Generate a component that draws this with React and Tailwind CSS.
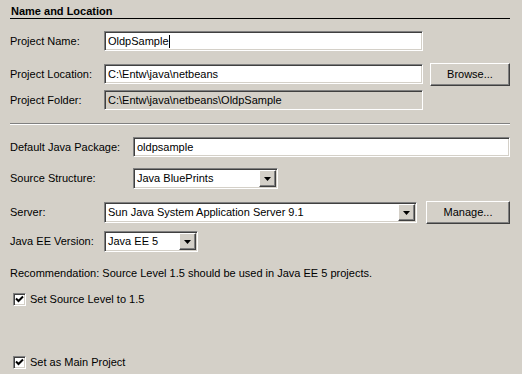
import React from "react";

const sunken =
  "border border-t-[#808080] border-l-[#808080] border-r-white border-b-white shadow-[inset_1px_1px_0_#404040,inset_-1px_-1px_0_#d4d0c8]";
const raised =
  "border border-t-white border-l-white border-r-[#404040] border-b-[#404040] shadow-[inset_-1px_-1px_0_#808080] bg-[#d4d0c8]";

function Field({ className = "", children, disabled }) {
  return (
    <div
      className={`${sunken} ${disabled ? "bg-[#d4d0c8]" : "bg-white"} h-[20px] flex items-center pl-[3px] whitespace-nowrap overflow-hidden ${className}`}
    >
      {children}
    </div>
  );
}

function Button({ className = "", children }) {
  return (
    <div className={`${raised} h-[23px] flex items-center justify-center ${className}`}>
      {children}
    </div>
  );
}

function Combo({ className = "", children }) {
  return (
    <div className={`${sunken} bg-white h-[21px] p-[1px] flex items-center ${className}`}>
      <div className="flex-1 pl-[2px] whitespace-nowrap overflow-hidden">{children}</div>
      <div className={`${raised} w-[17px] h-[17px] flex items-center justify-center`}>
        <svg width="7" height="4" viewBox="0 0 7 4">
          <polygon points="0,0 7,0 3.5,4" fill="#000" />
        </svg>
      </div>
    </div>
  );
}

function Check({ label, className = "" }) {
  return (
    <div className={`h-[17px] flex items-center pl-[3px] ${className}`}>
      <div className={`${sunken} bg-white w-[13px] h-[13px] flex items-center justify-center`}>
        <svg width="9" height="9" viewBox="0 0 9 9">
          <polyline points="1,3.5 3.5,6 8,1.5" fill="none" stroke="#000" strokeWidth="2" />
        </svg>
      </div>
      <span className="ml-[4px]">{label}</span>
    </div>
  );
}

export default function App() {
  return (
    <div className="w-[522px] h-[374px] bg-[#d4d0c8] pl-[10px] pr-[12px] flex flex-col overflow-hidden text-[11px] leading-[13px] text-black font-['Liberation_Sans',Arial,sans-serif]">
      <div className="h-[19px] pt-[5px] pl-[1px] font-bold border-b border-black">
        Name and Location
      </div>

      <div className="mt-[12px] h-[20px] flex items-center">
        <div className="w-[94px]">Project Name:</div>
        <Field className="w-[319px]">
          OldpSample
          <span className="inline-block w-[1px] h-[13px] bg-black" />
        </Field>
      </div>

      <div className="mt-[12px] h-[23px] flex items-start">
        <div className="w-[94px] self-center">Project Location:</div>
        <Field className="w-[319px] mt-[1px]">{"C:\\Entw\\java\\netbeans"}</Field>
        <Button className="ml-[7px] w-[80px]">Browse...</Button>
      </div>

      <div className="mt-[4px] h-[20px] flex items-center">
        <div className="w-[94px]">Project Folder:</div>
        <Field className="w-[319px]" disabled>
          {"C:\\Entw\\java\\netbeans\\OldpSample"}
        </Field>
      </div>

      <div className="mt-[13px] h-[2px] border-t border-t-[#808080] border-b border-b-white" />

      <div className="mt-[12px] h-[20px] flex items-center">
        <div className="w-[123px]">Default Java Package:</div>
        <Field className="flex-1">oldpsample</Field>
      </div>

      <div className="mt-[11px] h-[21px] flex items-center">
        <div className="w-[123px]">Source Structure:</div>
        <Combo className="w-[145px]">Java BluePrints</Combo>
      </div>

      <div className="mt-[12px] h-[23px] flex items-center">
        <div className="w-[94px]">Server:</div>
        <Combo className="w-[313px]">Sun Java System Application Server 9.1</Combo>
        <Button className="ml-[9px] w-[84px]">Manage...</Button>
      </div>

      <div className="mt-[7px] h-[21px] flex items-center">
        <div className="w-[94px]">Java EE Version:</div>
        <Combo className="w-[94px]">Java EE 5</Combo>
      </div>

      <div className="mt-[15px] h-[13px] whitespace-nowrap">
        Recommendation: Source Level 1.5 should be used in Java EE 5 projects.
      </div>

      <Check className="mt-[11px]" label="Set Source Level to 1.5" />
      <Check className="mt-[46px]" label="Set as Main Project" />
    </div>
  );
}
